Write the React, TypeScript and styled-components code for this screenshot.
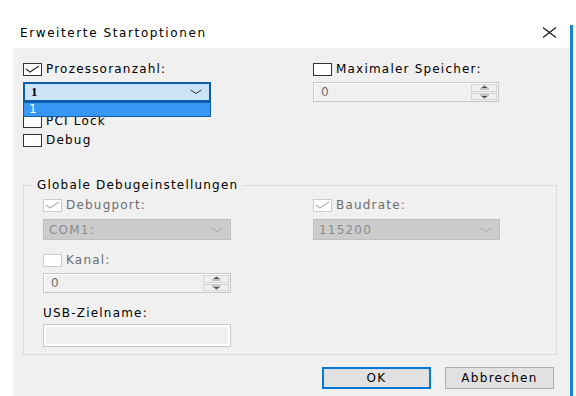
import { createGlobalStyle, styled } from "styled-components";

const GlobalStyle = createGlobalStyle`
  html, body {
    margin: 0;
    padding: 0;
    background: #ffffff;
  }
  body {
    font-family: "DejaVu Sans", "Liberation Sans", sans-serif;
    font-size: 12px;
    line-height: 14px;
    letter-spacing: 1.2px;
    color: #000;
  }
`;

const Page = styled.div`
  display: flex;
  height: 396px;
  padding-left: 13px;
  overflow: hidden;
`;

const Dialog = styled.div`
  width: 557px;
  display: flex;
  flex-direction: column;
`;

const Edge = styled.div`
  width: 3px;
  margin-top: 25px;
  background: #1883d7;
`;

const TitleBar = styled.div`
  height: 48px;
  display: flex;
  justify-content: space-between;
  align-items: flex-start;
  padding: 26px 13px 0 7px;
  box-sizing: border-box;
  background: #fff;
`;

const Title = styled.span`
  letter-spacing: 1.6px;
`;

const CloseIcon = styled.svg`
  margin-top: 1px;
`;

const Body = styled.div`
  flex: 1;
  background: #f0f0f0;
  padding: 14px 13px 0 10px;
`;

const Columns = styled.div<{ $gap: number; $right: number }>`
  display: grid;
  grid-template-columns: 188px ${(p) => p.$right}px;
  column-gap: ${(p) => p.$gap}px;
  align-items: start;
`;

const Stack = styled.div`
  display: flex;
  flex-direction: column;
`;

const Row = styled.label<{ $mt?: number; $disabled?: boolean }>`
  display: flex;
  align-items: center;
  gap: 4px;
  height: 14px;
  margin-top: ${(p) => p.$mt ?? 0}px;
  color: ${(p) => (p.$disabled ? "#6d6d6d" : "#000")};
  white-space: nowrap;
`;

const Box = styled.span<{ $disabled?: boolean }>`
  width: 19px;
  height: 13px;
  box-sizing: border-box;
  border: 1px solid ${(p) => (p.$disabled ? "#cccccc" : "#333333")};
  background: #fff;
  display: flex;
  flex-shrink: 0;
`;

const Combo = styled.div<{ $mt?: number; $h: number; $open?: boolean; $disabled?: boolean }>`
  position: relative;
  height: ${(p) => p.$h}px;
  margin-top: ${(p) => p.$mt ?? 0}px;
  box-sizing: border-box;
  display: flex;
  align-items: center;
  justify-content: space-between;
  padding: 0 7px 0 ${(p) => (p.$open ? 6 : 5)}px;
  border: ${(p) => (p.$open ? "2px solid #0f5da8" : "1px solid #bfbfbf")};
  background: ${(p) => (p.$open ? "#cce4f7" : "#cccccc")};
  color: ${(p) => (p.$disabled ? "#8a8a8a" : "#000")};
`;

const Bold = styled.span`
  font-family: "Liberation Serif", serif;
  font-weight: 700;
  font-size: 13px;
`;

const Popup = styled.div`
  position: absolute;
  left: -2px;
  right: -2px;
  top: calc(100% + 2px);
  height: 15px;
  box-sizing: border-box;
  border: 1px solid #0f5da8;
  background: #3897f5;
  color: #fff;
  padding-left: 5px;
  line-height: 13px;
`;

const Spinner = styled.div<{ $mt?: number }>`
  height: 20px;
  margin-top: ${(p) => p.$mt ?? 0}px;
  box-sizing: border-box;
  border: 1px solid #c8c8c8;
  box-shadow: inset 1px 1px 0 #fff;
  background: #f0f0f0;
  display: flex;
  color: #6d6d6d;
`;

const SpinValue = styled.span`
  flex: 1;
  padding-left: 7px;
  line-height: 18px;
`;

const SpinButtons = styled.div`
  width: 26px;
  display: flex;
  flex-direction: column;
  gap: 1px;
  padding: 1px 1px 1px 0;
`;

const SpinButton = styled.div`
  flex: 1;
  border: 1px solid #d4d4d4;
  background: #f0f0f0;
  display: flex;
  align-items: center;
  justify-content: center;
`;

const Label = styled.div<{ $mt?: number }>`
  height: 14px;
  margin-top: ${(p) => p.$mt ?? 0}px;
`;

const TextBox = styled.div<{ $mt?: number }>`
  height: 23px;
  margin-top: ${(p) => p.$mt ?? 0}px;
  box-sizing: border-box;
  border: 1px solid #c8c8c8;
  box-shadow: inset 0 0 0 2px #fff;
  background: #f0f0f0;
`;

const Group = styled.fieldset`
  margin: 31px 0 0 0;
  padding: 6px 0 7px 19px;
  border: 1px solid #dcdcdc;
  min-width: 0;
`;

const Legend = styled.legend`
  margin-left: -10px;
  padding: 0 4px;
`;

const Buttons = styled.div`
  display: flex;
  justify-content: flex-end;
  gap: 14px;
  margin-top: 12px;
  padding-right: 3px;
`;

const Button = styled.button<{ $primary?: boolean }>`
  width: 109px;
  height: 22px;
  box-sizing: border-box;
  font: inherit;
  letter-spacing: 1.3px;
  color: #000;
  background: #e1e1e1;
  border: ${(p) => (p.$primary ? "2px solid #0078d7" : "1px solid #adadad")};
  padding: 0;
`;

const Check = ({ disabled }: { disabled?: boolean }) => (
  <svg width="17" height="11" viewBox="0 0 17 11">
    <polyline
      points="2,5 6,8 15,2"
      fill="none"
      stroke={disabled ? "#b4b4b4" : "#333"}
      strokeWidth="1.2"
    />
  </svg>
);

const Chevron = ({ color }: { color: string }) => (
  <svg width="12" height="6" viewBox="0 0 12 6">
    <polyline points="0.5,1 6,4.5 11.5,1" fill="none" stroke={color} strokeWidth="1" />
  </svg>
);

const Arrow = ({ up }: { up?: boolean }) => (
  <svg width="9" height="5" viewBox="0 0 9 5">
    {up ? (
      <>
        <polygon points="4.5,0.5 8,3 1,3" fill="#555" />
        <line x1="0" y1="4" x2="9" y2="4" stroke="#999" strokeWidth="1" />
      </>
    ) : (
      <>
        <line x1="0" y1="1" x2="9" y2="1" stroke="#999" strokeWidth="1" />
        <polygon points="1,2 8,2 4.5,4.5" fill="#555" />
      </>
    )}
  </svg>
);

const CheckRow = ({
  label,
  checked,
  disabled,
  mt,
}: {
  label: string;
  checked?: boolean;
  disabled?: boolean;
  mt?: number;
}) => (
  <Row $mt={mt} $disabled={disabled}>
    <Box $disabled={disabled}>{checked && <Check disabled={disabled} />}</Box>
    {label}
  </Row>
);

const NumberField = ({ value, mt }: { value: string; mt?: number }) => (
  <Spinner $mt={mt}>
    <SpinValue>{value}</SpinValue>
    <SpinButtons>
      <SpinButton>
        <Arrow up />
      </SpinButton>
      <SpinButton>
        <Arrow />
      </SpinButton>
    </SpinButtons>
  </Spinner>
);

const App = () => {
  return (
    <>
      <GlobalStyle />
      <Page>
        <Dialog>
          <TitleBar>
            <Title>Erweiterte Startoptionen</Title>
            <CloseIcon width="15" height="11" viewBox="0 0 15 11">
              <line x1="1" y1="0.5" x2="14" y2="10.5" stroke="#111" strokeWidth="1.1" />
              <line x1="14" y1="0.5" x2="1" y2="10.5" stroke="#111" strokeWidth="1.1" />
            </CloseIcon>
          </TitleBar>
          <Body>
            <Columns $gap={102} $right={186}>
              <Stack>
                <CheckRow label="Prozessoranzahl:" checked />
                <Combo $mt={6} $h={20} $open>
                  <Bold>1</Bold>
                  <Chevron color="#333" />
                  <Popup>1</Popup>
                </Combo>
                <CheckRow label="PCI Lock" mt={12} />
                <CheckRow label="Debug" mt={5} />
              </Stack>
              <Stack>
                <CheckRow label="Maximaler Speicher:" />
                <NumberField value="0" mt={6} />
              </Stack>
            </Columns>

            <Group>
              <Legend>Globale Debugeinstellungen</Legend>
              <Columns $gap={82} $right={187}>
                <Stack>
                  <CheckRow label="Debugport:" checked disabled />
                  <Combo $mt={7} $h={21} $disabled>
                    <span>COM1:</span>
                    <Chevron color="#a9a9a9" />
                  </Combo>
                  <CheckRow label="Kanal:" disabled mt={13} />
                  <NumberField value="0" mt={6} />
                  <Label $mt={13}>USB-Zielname:</Label>
                  <TextBox $mt={4} />
                </Stack>
                <Stack>
                  <CheckRow label="Baudrate:" checked disabled />
                  <Combo $mt={7} $h={21} $disabled>
                    <span>115200</span>
                    <Chevron color="#a9a9a9" />
                  </Combo>
                </Stack>
              </Columns>
            </Group>

            <Buttons>
              <Button $primary>OK</Button>
              <Button>Abbrechen</Button>
            </Buttons>
          </Body>
        </Dialog>
        <Edge />
      </Page>
    </>
  );
};

export default App;
